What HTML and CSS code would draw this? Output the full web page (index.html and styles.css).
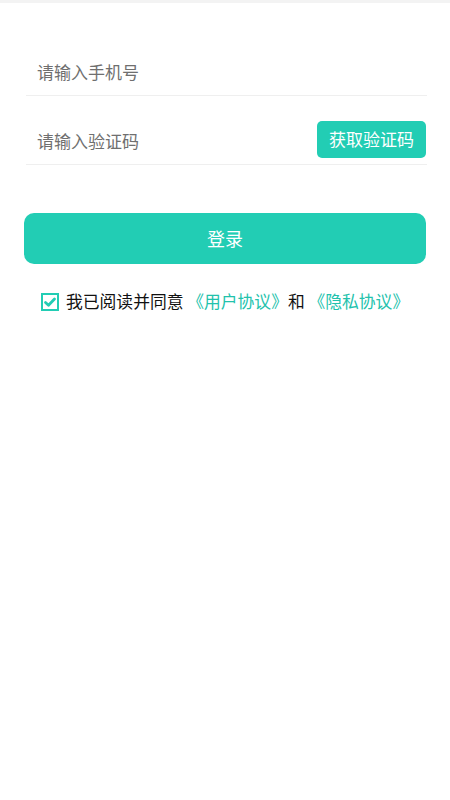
FILE: index.html
```html
<!DOCTYPE html>
<html lang="zh-CN">
<head>
    <meta charset="UTF-8">
    <meta name="viewport" content="width=device-width, initial-scale=1.0">
    <title>登录</title>
    <link rel="stylesheet" href="styles.css">
</head>
<body>

    <div class="topBar"></div>

    <!-- Login form -->
    <div class="loginForm">
        <div class="field">
            <input type="tel" class="fieldInput" placeholder="请输入手机号">
        </div>

        <div class="field fieldCode">
            <input type="text" class="fieldInput" placeholder="请输入验证码">
            <button type="button" class="codeBtn">获取验证码</button>
        </div>

        <button type="button" class="loginBtn">登录</button>

        <!-- Agreement -->
        <div class="agreement">
            <svg class="checkBox" width="18" height="18" viewBox="0 0 18 18">
                <rect x="1" y="1" width="16" height="16" fill="none" stroke="#22cdb4" stroke-width="2"/>
                <polyline points="4.5,9.5 7.5,12.3 13.5,6" fill="none" stroke="#22cdb4" stroke-width="2.8" stroke-linecap="round" stroke-linejoin="round"/>
            </svg>
            <span>我已阅读并同意 <a class="link">《用户协议》</a>和 <a class="link">《隐私协议》</a></span>
        </div>
    </div>

</body>
</html>
```

FILE: styles.css
```css
body {
    margin: 0;
    background: #fff;
    font-family: "Noto Sans CJK SC", "Noto Sans", sans-serif;
    color: #111;
}

.topBar {
    height: 3px;
    background: #f3f3f3;
}

.loginForm {
    padding: 46px 24px 0 24px;
}

.field {
    display: flex;
    align-items: center;
    height: 46px;
    margin: 0 -1px 0 2px;
    border-bottom: 1px solid #efefef;
}

.fieldCode {
    margin-top: 22px;
}

.fieldInput {
    flex: 1;
    min-width: 0;
    border: none;
    outline: none;
    padding: 0 0 2px 11px;
    font-family: inherit;
    font-size: 17px;
    color: #333;
    background: transparent;
}

.fieldInput::placeholder {
    color: #6f6f6f;
}

.codeBtn {
    height: 37px;
    margin-bottom: 4px;
    margin-right: 1px;
    padding: 0 12px 2px 12px;
    border: none;
    border-radius: 5px;
    background: #22cdb4;
    color: #fff;
    font-family: inherit;
    font-size: 17px;
}

.loginBtn {
    display: block;
    width: 100%;
    height: 51px;
    margin-top: 48px;
    padding-bottom: 2px;
    border: none;
    border-radius: 10px;
    background: #22cdb4;
    color: #fff;
    font-family: inherit;
    font-size: 18px;
}

.agreement {
    display: flex;
    align-items: center;
    gap: 7px;
    margin-top: 27px;
    padding-left: 17px;
    font-size: 16.8px;
    line-height: 20px;
}

.agreement span {
    padding-bottom: 2px;
}

.checkBox {
    flex: none;
}

.link {
    color: #22c2ac;
}
```
